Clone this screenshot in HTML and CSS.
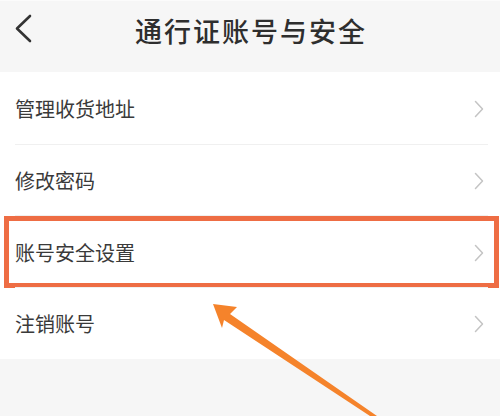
FILE: index.html
```html
<!DOCTYPE html>
<html lang="zh-CN">
<head>
<meta charset="utf-8">
<link rel="stylesheet" href="styles.css">
</head>
<body>
<div class="page">
  <header class="topbar">
    <div class="nav">
      <span class="back">
        <svg width="22" height="30" viewBox="0 0 22 30"><path d="M17 2 L4 14.5 L17 27" fill="none" stroke="#333" stroke-width="2.6" stroke-linecap="round" stroke-linejoin="round"/></svg>
      </span>
      <h1 class="title">通行证账号与安全</h1>
    </div>
  </header>
  <ul class="list">
    <li class="row"><span class="label">管理收货地址</span><svg class="chev" width="10" height="18" viewBox="0 0 10 18"><path d="M1.5 1.5 L8.5 9 L1.5 16.5" fill="none" stroke="#c4c4c4" stroke-width="1.5" stroke-linecap="round" stroke-linejoin="round"/></svg></li>
    <li class="row"><span class="label">修改密码</span><svg class="chev" width="10" height="18" viewBox="0 0 10 18"><path d="M1.5 1.5 L8.5 9 L1.5 16.5" fill="none" stroke="#c4c4c4" stroke-width="1.5" stroke-linecap="round" stroke-linejoin="round"/></svg></li>
    <li class="row highlighted"><span class="label">账号安全设置</span><svg class="chev" width="10" height="18" viewBox="0 0 10 18"><path d="M1.5 1.5 L8.5 9 L1.5 16.5" fill="none" stroke="#c4c4c4" stroke-width="1.5" stroke-linecap="round" stroke-linejoin="round"/></svg></li>
    <li class="row"><span class="label">注销账号</span><svg class="chev" width="10" height="18" viewBox="0 0 10 18"><path d="M1.5 1.5 L8.5 9 L1.5 16.5" fill="none" stroke="#c4c4c4" stroke-width="1.5" stroke-linecap="round" stroke-linejoin="round"/></svg></li>
  </ul>
  <div class="rest"></div>
  <svg class="arrow" width="500" height="416" viewBox="0 0 500 416">
    <polygon points="213,304 237,307 230,314 377,416 370,416 224,320 222,328" fill="#f5832b"/>
  </svg>
</div>
</body>
</html>
```

FILE: styles.css
```css
* { box-sizing: border-box; }
html, body { margin: 0; padding: 0; }
body {
  width: 500px;
  height: 416px;
  overflow: hidden;
  font-family: "Noto Sans CJK SC", "Noto Sans", sans-serif;
  background: #f6f6f6;
}
.page {
  position: relative;
  width: 500px;
  height: 416px;
  display: flex;
  flex-direction: column;
}
.topbar {
  background: #f6f6f6;
  border-top: 1px solid #fbfbfb;
  height: 72px;
  padding-bottom: 12px;
}
.nav {
  position: relative;
  height: 59px;
  display: flex;
  align-items: center;
  justify-content: center;
}
.back {
  position: absolute;
  left: 13px;
  top: 13px;
  display: flex;
}
.title {
  margin: 0;
  font-size: 27px;
  font-weight: 500;
  color: #2e2e2e;
  letter-spacing: 2px;
  line-height: 1;
  padding-left: 2px;
}
.list {
  list-style: none;
  margin: 0;
  padding: 0;
  background: #fff;
}
.row {
  position: relative;
  height: 71.7px;
  display: flex;
  align-items: center;
  justify-content: space-between;
  padding: 3px 16px 0 15px;
}
.row + .row::before {
  content: "";
  position: absolute;
  left: 15px;
  right: 12px;
  top: 0;
  height: 1px;
  background: #f0f0f0;
}
.label {
  font-size: 20px;
  color: #3a3a3a;
  line-height: 1;
}
.chev { display: block; }
.highlighted::after {
  content: "";
  position: absolute;
  left: 4px;
  right: 1px;
  top: 1px;
  bottom: -1px;
  border: 5px solid #ee6d44;
}
.rest { flex: 1; background: #f6f6f6; }
.arrow {
  position: absolute;
  left: 0;
  top: 0;
  pointer-events: none;
}
```
